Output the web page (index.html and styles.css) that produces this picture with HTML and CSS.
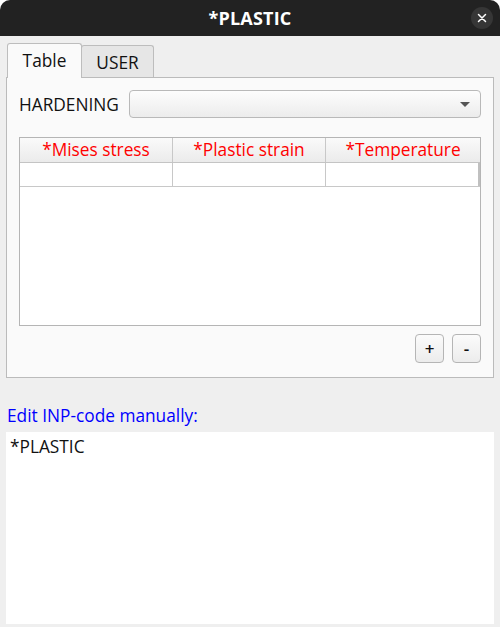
FILE: index.html
```html
<!DOCTYPE html>
<html>
<head>
<meta charset="utf-8">
<link rel="stylesheet" href="styles.css">
</head>
<body>
<div class="window">
  <div class="titlebar">
    <span class="title">*PLASTIC</span>
    <div class="close">
      <svg width="10" height="10" viewBox="0 0 10 10"><path d="M1.5 1.5L8.5 8.5M8.5 1.5L1.5 8.5" stroke="#fff" stroke-width="1.5" stroke-linecap="round"/></svg>
    </div>
  </div>
  <div class="content">
    <div class="tabs">
      <div class="tab active">Table</div>
      <div class="tab">USER</div>
    </div>
    <div class="pane">
      <div class="row">
        <span class="label">HARDENING</span>
        <div class="combo"><span class="arrow"></span></div>
      </div>
      <div class="table">
        <div class="thead">
          <div class="th">*Mises stress</div>
          <div class="th">*Plastic strain</div>
          <div class="th last">*Temperature</div>
        </div>
        <div class="tr">
          <div class="td"></div>
          <div class="td"></div>
          <div class="td last"></div>
        </div>
      </div>
      <div class="buttons">
        <div class="btn">+</div>
        <div class="btn">-</div>
      </div>
    </div>
    <div class="edit-label">Edit INP-code manually:</div>
    <div class="editor">*PLASTIC</div>
  </div>
</div>
</body>
</html>
```

FILE: styles.css
```css
html, body {
  margin: 0;
  padding: 0;
  background: #ffffff;
}
body {
  width: 500px;
  height: 627px;
  overflow: hidden;
  font-family: "Open Sans", "DejaVu Sans", sans-serif;
  font-size: 17.3px;
  color: #111;
}
.window {
  width: 500px;
  height: 627px;
  background: #efefef;
  border-radius: 10px 10px 0 0;
  overflow: hidden;
  display: flex;
  flex-direction: column;
}
.titlebar {
  height: 36px;
  flex: none;
  background: #222222;
  display: flex;
  align-items: center;
  justify-content: center;
  position: relative;
}
.title {
  color: #ffffff;
  font-weight: bold;
  font-size: 18px;
  letter-spacing: 0.2px;
}
.close {
  position: absolute;
  right: 7px;
  top: 7px;
  width: 22px;
  height: 22px;
  border-radius: 50%;
  background: #363636;
  display: flex;
  align-items: center;
  justify-content: center;
}
.content {
  flex: 1;
  display: flex;
  flex-direction: column;
  padding: 7px 6px 3px 6px;
}
.tabs {
  display: flex;
  align-items: flex-end;
  padding-left: 1px;
  height: 34px;
  position: relative;
  z-index: 1;
}
.tab {
  box-sizing: border-box;
  border: 1px solid #bdbdbd;
  border-bottom: none;
  border-radius: 3px 3px 0 0;
  display: flex;
  align-items: center;
  justify-content: center;
}
.tab.active {
  width: 75px;
  height: 35px;
  background: #fafafa;
  margin-bottom: -1px;
  padding-bottom: 1px;
}
.tab:not(.active) {
  width: 73px;
  height: 32px;
  background: #e6e6e6;
  margin-left: -1px;
  padding-top: 1px;
}
.pane {
  box-sizing: border-box;
  height: 301px;
  width: 488px;
  border: 1px solid #bbbbbb;
  background: #fafafa;
  padding: 12px 12px 0 12px;
  display: flex;
  flex-direction: column;
}
.row {
  display: flex;
  align-items: center;
  height: 28px;
}
.label {
  width: 110px;
  flex: none;
}
.combo {
  flex: 1;
  box-sizing: border-box;
  height: 28px;
  border: 1px solid #b9b9b9;
  border-radius: 4px;
  background: linear-gradient(#fdfdfd, #ececec);
  position: relative;
}
.arrow {
  position: absolute;
  right: 10px;
  top: 11px;
  width: 0;
  height: 0;
  border-left: 5px solid transparent;
  border-right: 5px solid transparent;
  border-top: 5px solid #555;
}
.table {
  margin-top: 19px;
  box-sizing: border-box;
  height: 189px;
  border: 1px solid #b5b5b5;
  background: #ffffff;
}
.thead {
  display: grid;
  grid-template-columns: 153px 153px 1fr;
  height: 24px;
  background: linear-gradient(#fafafa, #ebebeb);
  border-bottom: 1px solid #c4c4c4;
}
.th {
  color: #ff0000;
  display: flex;
  align-items: center;
  justify-content: center;
  border-right: 1px solid #c8c8c8;
  line-height: 24px;
}
.tr {
  display: grid;
  grid-template-columns: 153px 153px 1fr;
  height: 23px;
  border-bottom: 1px solid #c8c8c8;
}
.td {
  border-right: 1px solid #c8c8c8;
}
.th.last {
  border-right: none;
}
.td.last {
  border-right: 2px solid #c0c0c0;
}
.buttons {
  display: flex;
  justify-content: flex-end;
  gap: 8px;
  margin-top: 8px;
}
.btn {
  box-sizing: border-box;
  width: 29px;
  height: 29px;
  border: 1px solid #b5b5b5;
  border-radius: 4px;
  background: linear-gradient(#fbfbfb, #ececec);
  display: flex;
  align-items: center;
  justify-content: center;
  font-size: 17px;
  font-weight: 600;
}
.edit-label {
  color: #0000ff;
  margin-top: 27px;
  height: 22px;
  line-height: 22px;
  padding-left: 1px;
}
.editor {
  margin-top: 5px;
  flex: 1;
  background: #ffffff;
  padding: 4px 4px 0 4px;
  line-height: 22px;
}
```
